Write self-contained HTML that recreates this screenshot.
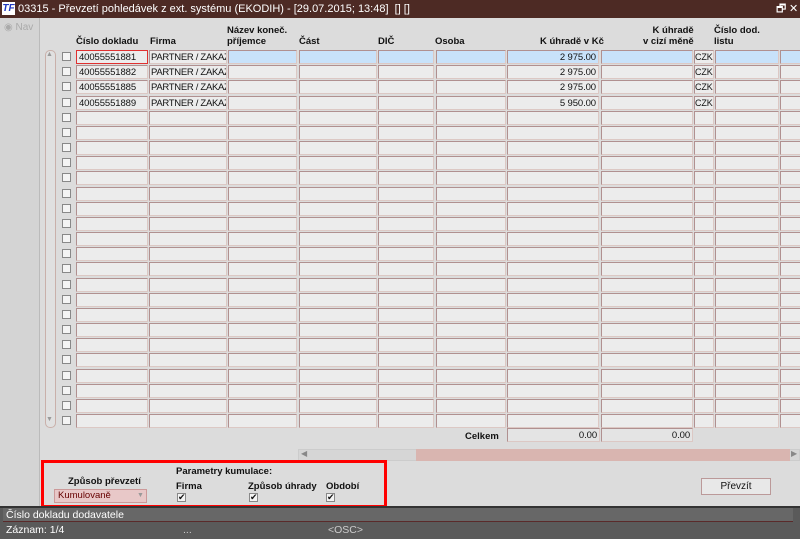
<!DOCTYPE html><html><head><meta charset="utf-8"><style>
*{margin:0;padding:0;box-sizing:border-box}
body{width:800px;height:539px;overflow:hidden;background:#dcdcdc;font-family:"Liberation Sans",sans-serif;font-size:10px;color:#111;position:relative}
.a{position:absolute}
.title{left:0;top:0;width:800px;height:18px;background:#4d2a24;color:#fff;font-size:11px;line-height:18px;padding-left:18px}
.cell{position:absolute;height:14px;background:#ececec;border:1px solid #dcc8c4;border-top-color:#b09090;border-left-color:#b09090;font-size:9.5px;line-height:13px;padding:0 2px;white-space:nowrap;overflow:hidden;letter-spacing:-0.1px}
.hd{position:absolute;font-weight:bold;font-size:9.5px;line-height:11px}
.cb{position:absolute;width:9px;height:9px;border:1px solid #888;background:#f4f4f4}
</style></head><body>
<div class="a title"><span class="a" style="left:2px;top:2px;width:13px;height:13px;background:#fff;color:#2038c0;font-weight:bold;font-style:italic;font-size:10px;line-height:13px;text-align:center">TF</span>03315 - Převzetí pohledávek z ext. systému (EKODIH) - [29.07.2015; 13:48]&nbsp; [] []<span class="a" style="left:776px;top:0">🗗</span><span class="a" style="left:789px;top:0">✕</span></div>
<div class="a" style="left:0;top:18px;width:40px;height:488px;background:#d4d4d4;border-right:1px solid #bbb"></div>
<div class="a" style="left:4px;top:22px;color:#aaa;font-size:10px">◉ Nav</div>
<div class="a" style="left:45px;top:50px;width:11px;height:378px;border:1px solid #c9b0aa;border-radius:5px;background:#e0e0e0"></div>
<div class="a" style="left:46px;top:51px;font-size:7px;color:#999">▲</div>
<div class="a" style="left:46px;top:416px;font-size:7px;color:#999">▼</div>
<div class="hd" style="left:76px;top:36px">Číslo dokladu</div>
<div class="hd" style="left:150px;top:36px">Firma</div>
<div class="hd" style="left:227px;top:25px">Název koneč.<br>příjemce</div>
<div class="hd" style="left:299px;top:36px">Část</div>
<div class="hd" style="left:378px;top:36px">DIČ</div>
<div class="hd" style="left:435px;top:36px">Osoba</div>
<div class="hd" style="left:540px;top:36px">K úhradě v Kč</div>
<div class="hd" style="left:643px;top:25px;text-align:right">K úhradě<br>v cizí měně</div>
<div class="hd" style="left:714px;top:25px">Číslo dod.<br>listu</div>
<div id="g"></div>
<div class="hd" style="left:465px;top:431px">Celkem</div>
<div class="cell" style="left:507px;top:428px;width:93px;text-align:right;background:#e4e4e4">0.00</div>
<div class="cell" style="left:601px;top:428px;width:92px;text-align:right;background:#e4e4e4">0.00</div>
<div class="a" style="left:298px;top:449px;width:502px;height:12px;background:#d6d6d6;border:1px solid #ccc"></div>
<div class="a" style="left:416px;top:449px;width:374px;height:12px;background:#d9b5b0"></div>
<div class="a" style="left:301px;top:449px;font-size:8px;color:#888">◀</div>
<div class="a" style="left:791px;top:449px;font-size:8px;color:#888">▶</div>
<div class="a" style="left:41px;top:460px;width:346px;height:48px;border:3px solid #f00"></div>
<div class="hd" style="left:68px;top:476px">Způsob převzetí</div>
<div class="a" style="left:54px;top:489px;width:93px;height:14px;background:#e8c8c8;border:1px solid #c99;font-size:9.5px;line-height:12px;padding-left:3px;color:#600">Kumulovaně<span class="a" style="left:82px;top:0;color:#999;font-size:7px">▼</span></div>
<div class="hd" style="left:176px;top:466px">Parametry kumulace:</div>
<div class="hd" style="left:176px;top:481px">Firma</div>
<div class="hd" style="left:248px;top:481px">Způsob úhrady</div>
<div class="hd" style="left:326px;top:481px">Období</div>
<div class="cb" style="left:177px;top:493px;font-size:9px;line-height:7px">✔</div>
<div class="cb" style="left:249px;top:493px;font-size:9px;line-height:7px">✔</div>
<div class="cb" style="left:326px;top:493px;font-size:9px;line-height:7px">✔</div>
<div class="a" style="left:701px;top:478px;width:70px;height:17px;background:#e8e8e8;border:1px solid #b99;text-align:center;line-height:15px;font-size:10px">Převzít</div>
<div class="a" style="left:0;top:506px;width:800px;height:33px;background:#5a5a5a;border-top:2px solid #333"></div>
<div class="a" style="left:3px;top:508px;width:790px;height:14px;background:#676767;border-bottom:1px solid #5a2a2a;color:#fff;font-size:10.5px;line-height:14px;padding-left:3px">Číslo dokladu dodavatele</div>
<div class="a" style="left:3px;top:523px;width:790px;height:14px;color:#fff;font-size:10.5px;line-height:14px;padding-left:3px">Záznam: 1/4<span class="a" style="left:325px;color:#ccc">&lt;OSC&gt;</span><span class="a" style="left:180px;color:#ccc">...</span></div>
<script>
var cols=[[76,72],[149,78],[228,69],[299,78],[378,56],[436,70],[507,92],[601,92],[694,20],[715,64],[780,22]];
var data=[["40055551881","PARTNER / ZAKAZ","2 975.00"],["40055551882","PARTNER / ZAKAZ","2 975.00"],["40055551885","PARTNER / ZAKAZ","2 975.00"],["40055551889","PARTNER / ZAKAZ","5 950.00"]];
var h="";for(var r=0;r<25;r++){var y=Math.round(50+r*15.17);
h+='<div class="cb" style="left:62px;top:'+(y+2)+'px"></div>';
for(var c=0;c<cols.length;c++){var t="",st="";var d=data[r];
if(d){if(c==0)t=d[0];if(c==1)t=d[1];if(c==6){t=d[2];st="text-align:right;"}if(c==8)t="CZK";}
if(r==0&&c!=0&&c!=1&&c!=8)st+="background:#c8e2fa;";
if(r==0&&c==0)st+="border:1px solid #e03030;";
if(c==1)st+="padding:0 1px;letter-spacing:-0.3px;";
if(c==8)st+="padding:0;font-size:9px;";
h+='<div class="cell" style="left:'+cols[c][0]+'px;top:'+y+'px;width:'+cols[c][1]+'px;'+st+'">'+t+'</div>';}}
document.getElementById("g").innerHTML=h;
</script>
</body></html>
